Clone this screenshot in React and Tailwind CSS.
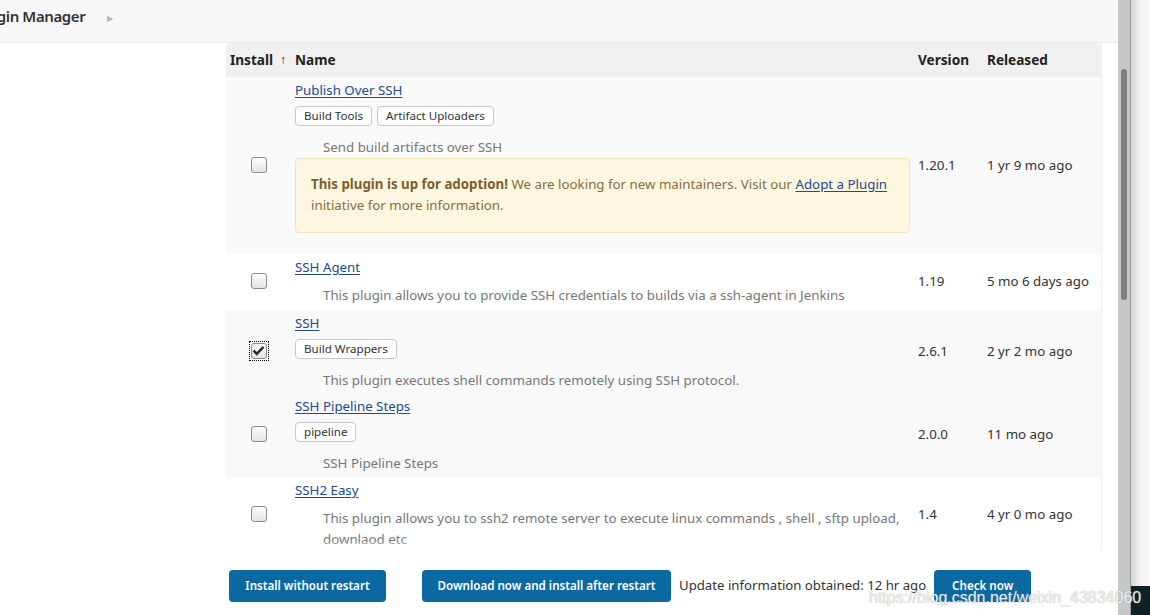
import React from 'react';

const plugins = [
  {
    name: 'Publish Over SSH',
    tags: ['Build Tools', 'Artifact Uploaders'],
    desc: 'Send build artifacts over SSH',
    version: '1.20.1',
    released: '1 yr 9 mo ago',
    notice: true,
    bg: 'bg-[#fafafa]',
    pad: 'pt-[3px] pb-[21px]',
  },
  {
    name: 'SSH Agent',
    tags: [],
    desc: 'This plugin allows you to provide SSH credentials to builds via a ssh-agent in Jenkins',
    version: '1.19',
    released: '5 mo 6 days ago',
    bg: 'bg-white',
    pad: 'pt-[3px] pb-[4px]',
  },
  {
    name: 'SSH',
    tags: ['Build Wrappers'],
    desc: 'This plugin executes shell commands remotely using SSH protocol.',
    version: '2.6.1',
    released: '2 yr 2 mo ago',
    checked: true,
    bg: 'bg-[#f9f9f9]',
    pad: 'pt-[3px] pb-[2px]',
  },
  {
    name: 'SSH Pipeline Steps',
    tags: ['pipeline'],
    desc: 'SSH Pipeline Steps',
    version: '2.0.0',
    released: '11 mo ago',
    bg: 'bg-[#f9f9f9]',
    pad: 'pt-[3px] pb-[3px]',
  },
  {
    name: 'SSH2 Easy',
    tags: [],
    desc: 'This plugin allows you to ssh2 remote server to execute linux commands , shell , sftp upload, downlaod etc',
    version: '1.4',
    released: '4 yr 0 mo ago',
    bg: 'bg-white',
    pad: 'pt-[3px] pb-[2px]',
  },
];

function Checkbox({ checked }) {
  return (
    <div className={checked ? 'p-[1px] outline outline-1 outline-dotted outline-black -translate-y-[1px]' : '-translate-y-[1px]'}>
      <div className="w-[16px] h-[16px] rounded-[3px] border border-[#8a8a8a] bg-gradient-to-b from-[#fdfdfd] to-[#e4e4e4] flex items-center justify-center">
        {checked && (
          <svg width="13" height="11" viewBox="0 0 13 11">
            <path d="M1.5 5.5 L4.8 8.8 L11.5 1.8" fill="none" stroke="#2b2f33" strokeWidth="2.6" />
          </svg>
        )}
      </div>
    </div>
  );
}

function PluginRow({ p }) {
  return (
    <div className={`grid grid-cols-[69px_623px_69px_115px] items-center ${p.bg}`}>
      <div className="flex justify-center pr-[4px]">
        <Checkbox checked={p.checked} />
      </div>
      <div className={`flex flex-col ${p.pad}`}>
        <div className="leading-[20px]">
          <a href="#" className="text-[#204b8f] underline underline-offset-2">{p.name}</a>
        </div>
        {p.tags.length > 0 && (
          <div className="flex gap-[5px] mt-[6px]">
            {p.tags.map((t) => (
              <span key={t} className="h-[20px] px-[8px] flex items-center border border-[#c8c8c8] rounded-[4px] bg-white text-[11.6px] text-[#333]">
                {t}
              </span>
            ))}
          </div>
        )}
        <div className={`pl-[28px] pr-[14px] leading-[21px] text-[#777] ${p.tags.length > 0 ? 'mt-[11px]' : 'mt-[8px]'}`}>
          {p.desc}
        </div>
        {p.notice && (
          <div className="mr-[8px] border border-[#f5e3b2] bg-[#fdf6e1] rounded-[4px] px-[15px] pt-[15px] pb-[16px] leading-[21px] text-[#8a6d3b]">
            <b className="font-bold text-[#7d5e2c]">This plugin is up for adoption!</b> We are looking for new maintainers. Visit our{' '}
            <a href="#" className="text-[#204b8f] underline underline-offset-2">Adopt a Plugin</a> initiative for more information.
          </div>
        )}
      </div>
      <div className="text-[#333]">{p.version}</div>
      <div className="text-[#333]">{p.released}</div>
    </div>
  );
}

export default function App() {
  return (
    <div className="relative w-[1150px] h-[615px] overflow-hidden flex bg-white font-['Noto_Sans',sans-serif] text-[13.3px]">
      {/* page */}
      <div className="w-[1118px] flex flex-col">
        <div className="h-[43px] shrink-0 bg-[#f8f8f8] border-b border-[#ececec] flex items-center overflow-hidden">
          <span className="ml-[-25px] text-[15px] font-semibold tracking-[-0.4px] text-[#333] -translate-y-[5px]">Plugin Manager</span>
          <span className="ml-[22px] text-[8px] text-[#b5b5b5] -translate-y-[3px]">▶</span>
        </div>
        <div className="flex flex-1">
          <div className="w-[226px] shrink-0" />
          <div className="w-[876px] flex flex-col">
            <div className="relative h-[506px] overflow-hidden border-r border-[#eeeeee]">
              <div className="grid grid-cols-[69px_623px_69px_115px] items-center h-[34px] bg-[#f0f0f0] rounded-t-[4px] font-bold text-[#222] text-[13.6px]">
                <div className="pl-[4px] flex items-center">
                  Install <span className="ml-[7px] text-[12px] font-bold">↑</span>
                </div>
                <div>Name</div>
                <div>Version</div>
                <div>Released</div>
              </div>
              {plugins.map((p) => (
                <PluginRow key={p.name} p={p} />
              ))}
              <div className="absolute left-0 right-0 bottom-0 h-[8px] bg-gradient-to-b from-white/0 to-white" />
            </div>
            <div className="flex items-center mt-[21px] ml-[3px]">
              <button className="h-[32px] w-[157px] rounded-[4px] bg-[#0b68a1] text-white font-semibold text-[11.6px]">
                Install without restart
              </button>
              <button className="ml-[36px] h-[32px] w-[249px] rounded-[4px] bg-[#0b68a1] text-white font-semibold text-[11.6px]">
                Download now and install after restart
              </button>
              <span className="ml-[8px] text-[13.2px] text-[#333]">Update information obtained: 12 hr ago</span>
              <button className="ml-[8px] h-[32px] w-[97px] rounded-[4px] bg-[#0b68a1] text-white font-semibold text-[11.6px]">
                Check now
              </button>
            </div>
          </div>
        </div>
      </div>
      {/* scrollbar */}
      <div className="w-[13px] h-full bg-[#c6c8c7] border-r border-[#9a9a9a] pt-[69px] flex justify-center">
        <div className="w-[6px] h-[231px] rounded-[3px] bg-[#7b7f7f]" />
      </div>
      {/* window shadow */}
      <div className="flex-1 flex flex-col">
        <div className="flex-1 bg-gradient-to-r from-[#d6d6d6] via-[#f3f3f3] to-[#fafafa]" />
        <div className="h-[29px] bg-[#0f2126]" />
      </div>
      {/* watermark */}
      <div className="absolute left-[869px] top-[586px] text-[16px] font-['Liberation_Sans',sans-serif] text-white/85 [text-shadow:0_0_1px_#8a8a8a]">
        https://blog.csdn.net/weixin_43834060
      </div>
    </div>
  );
}
